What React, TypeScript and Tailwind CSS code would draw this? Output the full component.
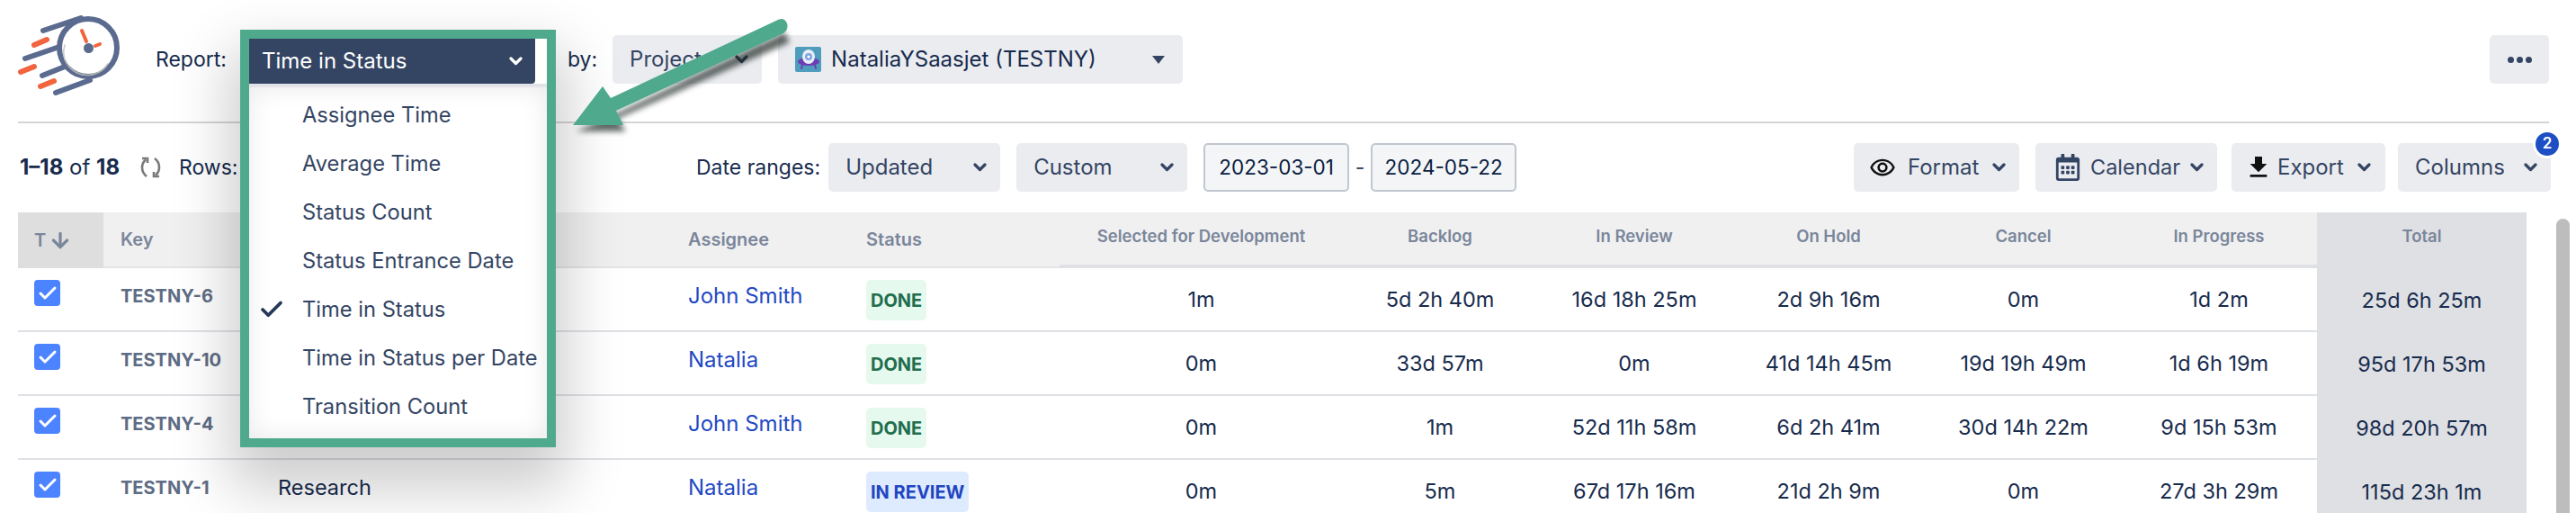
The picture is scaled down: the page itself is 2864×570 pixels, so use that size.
import { ArrowDown, Check } from "lucide-react";
import { FaRegCalendarAlt } from "react-icons/fa";
import { MdFileDownload, MdOutlineRemoveRedEye } from "react-icons/md";

const rows = [
  { key: "TESTNY-6", summary: "", assignee: "John Smith", status: "DONE", times: ["1m", "5d 2h 40m", "16d 18h 25m", "2d 9h 16m", "0m", "1d 2m", "25d 6h 25m"] },
  { key: "TESTNY-10", summary: "", assignee: "Natalia", status: "DONE", times: ["0m", "33d 57m", "0m", "41d 14h 45m", "19d 19h 49m", "1d 6h 19m", "95d 17h 53m"] },
  { key: "TESTNY-4", summary: "", assignee: "John Smith", status: "DONE", times: ["0m", "1m", "52d 11h 58m", "6d 2h 41m", "30d 14h 22m", "9d 15h 53m", "98d 20h 57m"] },
  { key: "TESTNY-1", summary: "Research", assignee: "Natalia", status: "IN REVIEW", times: ["0m", "5m", "67d 17h 16m", "21d 2h 9m", "0m", "27d 3h 29m", "115d 23h 1m"] },
];

const reports = ["Assignee Time", "Average Time", "Status Count", "Status Entrance Date", "Time in Status", "Time in Status per Date", "Transition Count"];
const timeColumns = ["Selected for Development", "Backlog", "In Review", "On Hold", "Cancel", "In Progress"];
const gridCols = "grid grid-cols-[95px_183px_459px_198px_223px_315px_216px_216px_216px_217px_218px_233px]";

function Chevron({ className = "text-[#344563]" }: { className?: string }) {
  return (
    <svg width="15" height="10" viewBox="0 0 15 10" className={`shrink-0 ${className}`}>
      <path d="M2 2 L7.5 7.5 L13 2" fill="none" stroke="currentColor" strokeWidth="3.2" strokeLinecap="round" strokeLinejoin="round" />
    </svg>
  );
}

function Logo() {
  return (
    <svg width="115" height="92" viewBox="20 15 115 92" className="shrink-0">
      <g fill="none" strokeLinecap="round">
        <circle cx="98" cy="53" r="32" stroke="#5a6b8f" strokeWidth="6" />
        <path d="M72 66 A27 27 0 0 0 120 71" stroke="#b5b5b5" strokeWidth="1.5" />
        <path d="M72 50 A27 27 0 0 0 72 66" stroke="#c8c8c8" strokeWidth="1.5" />
        <g stroke="#5a6b8f" strokeWidth="6">
          <path d="M48 34 L90 20" />
          <path d="M28 65 L66 52" />
          <path d="M47 84 L72 74" />
          <path d="M62 103 L100 89" />
        </g>
        <g stroke="#f2643d" strokeWidth="6">
          <path d="M38 50 L52 44" />
          <path d="M23 80 L38 74" />
          <path d="M45 96 L60 90" />
        </g>
        <g stroke="#f2643d" strokeWidth="4">
          <path d="M91 34 L96 46" />
          <path d="M106 51 L111 49" />
        </g>
      </g>
      <circle cx="98.5" cy="53.5" r="5.5" fill="#5a6b8f" />
    </svg>
  );
}

function ProjectAvatar() {
  return (
    <svg width="29" height="28" viewBox="0 0 29 28" className="shrink-0">
      <rect width="29" height="28" rx="2" fill="#4f9dbd" />
      <ellipse cx="15" cy="16.5" rx="12" ry="4.5" fill="#6b3fb3" />
      <path d="M8 20 L7 24 M22 20 L23 24" stroke="#6b3fb3" strokeWidth="2" strokeLinecap="round" />
      <ellipse cx="15" cy="11" rx="7" ry="8" fill="#e8eef8" />
      <circle cx="15" cy="11" r="4" fill="#7fa4e0" />
      <circle cx="15" cy="11" r="1.6" fill="#ffffff" />
    </svg>
  );
}

function RefreshIcon() {
  return (
    <svg width="25" height="26" viewBox="0 0 25 26" className="shrink-0 text-[#7a7a7a]">
      <g fill="none" stroke="currentColor" strokeWidth="2.6">
        <path d="M8 23 C1.5 18 1.5 9 7 4.5" />
        <path d="M17 3 C23.5 8 23.5 17 18 21.5" />
        <path d="M3 3 H9 V8" />
        <path d="M22 23 H16 V18" />
      </g>
    </svg>
  );
}

function Arrow() {
  return (
    <svg width="300" height="170" viewBox="600 10 300 170" className="absolute left-[600px] top-[10px] pointer-events-none">
      <g transform="translate(3 7)" opacity="0.7" className="blur-[3px]">
        <path d="M869 29 L676 122 L637 139 L693 139 L683 125 L875 40 Z" fill="#1f2a25" />
      </g>
      <path d="M865 22 Q872 19 875 26 Q877 33 871 37 L685 123 L693 139 L637 139 L670 96 L679 109 Z" fill="#4fa98d" />
    </svg>
  );
}

function ReportMenu() {
  return (
    <div className="absolute left-[267px] top-[33px] w-[351px] h-[464px] border-[10px] border-[#4fa98d] bg-white shadow-[0_34px_60px_12px_rgba(0,0,0,0.2)]">
      <div className="flex h-[50px] w-[318px] items-center justify-between rounded-br-[4px] bg-[#344563] pl-[14px] pr-[14px] text-[24px] text-white">
        Time in Status
        <Chevron className="text-white" />
      </div>
      <div className="h-[4px] bg-[#e2e3e8]" />
      <div className="flex h-[390px] flex-col pt-[4px] shadow-[inset_0_0_28px_rgba(0,0,0,0.09)] text-[23.7px] text-[#344563]">
        {reports.map((name) => (
          <div key={name} className="flex h-[54px] shrink-0 items-center pl-[59px] relative whitespace-nowrap">
            {name === "Time in Status" && <Check className="absolute left-[10px] text-[#253858]" size={30} strokeWidth={3} />}
            {name}
          </div>
        ))}
      </div>
    </div>
  );
}

function Btn({ className, children }: { className: string; children: React.ReactNode }) {
  return <div className={`flex h-[54px] items-center rounded-[5px] bg-[#ebecf0] text-[24px] text-[#344563] ${className}`}>{children}</div>;
}

export default function App() {
  return (
    <div className="relative h-[570px] w-[2864px] overflow-hidden bg-white text-[#172b4d] font-['Inter',sans-serif]">
      <div className="flex h-[135px] items-start pl-[20px] pr-[30px]">
        <div className="mt-[15px]"><Logo /></div>
        <div className="mt-[39px] flex h-[54px] flex-1 items-center">
          <span className="ml-[38px] text-[23px]">Report:</span>
          <span className="ml-[379px] text-[23px]">by:</span>
          <Btn className="ml-[17px] w-[166px] justify-between pl-[19px] pr-[15px]">
            Project
            <Chevron className="text-[#253858]" />
          </Btn>
          <Btn className="ml-[18px] w-[450px] pl-[19px] pr-[20px]">
            <ProjectAvatar />
            <span className="ml-[11px] text-[#172b4d]">NataliaYSaasjet (TESTNY)</span>
            <span className="ml-auto h-0 w-0 border-x-[7px] border-t-[9px] border-x-transparent border-t-[#344563]" />
          </Btn>
          <Btn className="ml-auto w-[66px] justify-center gap-[3px]">
            <span className="h-[7px] w-[7px] rounded-full bg-[#344563]" />
            <span className="h-[7px] w-[7px] rounded-full bg-[#344563]" />
            <span className="h-[7px] w-[7px] rounded-full bg-[#344563]" />
          </Btn>
        </div>
      </div>

      <div className="ml-[20px] mr-[30px] h-[2px] bg-[#d4d4d4]" />

      <div className="mt-[22px] flex h-[54px] items-center pl-[22px] pr-[28px] text-[23px]">
        <span className="w-[133px] shrink-0 whitespace-nowrap text-[24px]">
          <span className="font-bold">1–18</span> of <span className="font-bold">18</span>
        </span>
        <RefreshIcon />
        <span className="ml-[19px] w-[576px] shrink-0">Rows:</span>
        <span className="-ml-[1px]">Date ranges:</span>
        <Btn className="ml-[9px] w-[191px] justify-between pl-[19px] pr-[15px]">
          Updated
          <Chevron />
        </Btn>
        <Btn className="ml-[18px] w-[190px] justify-between pl-[19px] pr-[15px]">
          Custom
          <Chevron />
        </Btn>
        <div className="ml-[18px] flex h-[54px] w-[162px] items-center justify-center rounded-[5px] border-2 border-[#c1c7d0] bg-[#f4f5f7] text-[22.5px] text-[#091e42]">2023-03-01</div>
        <span className="w-[24px] text-center text-[#344563]">-</span>
        <div className="flex h-[54px] w-[162px] items-center justify-center rounded-[5px] border-2 border-[#c1c7d0] bg-[#f4f5f7] text-[22.5px] text-[#091e42]">2024-05-22</div>
        <Btn className="ml-auto w-[184px] pl-[17px] pr-[15px]">
          <MdOutlineRemoveRedEye className="text-[#111] shrink-0" size={30} />
          <span className="ml-[13px]">Format</span>
          <span className="ml-auto"><Chevron /></span>
        </Btn>
        <Btn className="ml-[18px] w-[202px] pl-[21px] pr-[15px]">
          <FaRegCalendarAlt size={30} className="shrink-0" />
          <span className="ml-[10px] text-[23.5px]">Calendar</span>
          <span className="ml-auto"><Chevron /></span>
        </Btn>
        <Btn className="ml-[16px] w-[171px] pl-[14px] pr-[16px]">
          <MdFileDownload className="text-[#111] shrink-0" size={32} />
          <span className="ml-[5px]">Export</span>
          <span className="ml-auto"><Chevron /></span>
        </Btn>
        <Btn className="relative ml-[14px] w-[170px] justify-between pl-[19px] pr-[15px]">
          Columns
          <Chevron />
          <span className="absolute -right-[12px] -top-[15px] flex h-[32px] w-[32px] items-center justify-center rounded-full border-[3px] border-white bg-[#1d4fc4] text-[17px] font-semibold text-white">2</span>
        </Btn>
      </div>

      <div className={`${gridCols} ml-[20px] mt-[23px] h-[62px] text-[#7a869a] font-semibold`}>
        <div className="flex items-center gap-[3px] bg-[#dedede] pl-[18px] text-[20px]">
          T
          <ArrowDown size={26} strokeWidth={3} />
        </div>
        <div className="flex items-center border-b-2 border-[#e4e4e4] bg-[#f0f0f1] pl-[19px] text-[20px]">Key</div>
        <div className="border-b-2 border-[#e4e4e4] bg-[#f0f0f1]" />
        <div className="flex items-center border-b-2 border-[#e4e4e4] bg-[#f0f0f1] pl-[8px] text-[20px]">Assignee</div>
        <div className="flex items-center border-b-2 border-[#e4e4e4] bg-[#f0f0f1] pl-[8px] text-[20px]">Status</div>
        {timeColumns.map((name) => (
          <div key={name} className="flex items-center justify-center border-b-4 border-[#e0e1e5] bg-[#f0f0f1] pb-[4px] text-[18.5px]">{name}</div>
        ))}
        <div className="flex items-center justify-center bg-[#dfe0e4] pb-[8px] text-[18.5px]">Total</div>
      </div>

      {rows.map((row) => (
        <div key={row.key} className={`${gridCols} ml-[20px] h-[71px] text-[23.5px]`}>
          <div className="border-b-2 border-[#dfe1e6] pl-[18px] pt-[13px]">
            <div className="flex h-[29px] w-[29px] items-center justify-center rounded-[4px] bg-[#4c84ff]">
              <Check size={24} strokeWidth={3} className="text-white" />
            </div>
          </div>
          <div className="flex items-center border-b-2 border-[#dfe1e6] pb-[8px] pl-[19px] text-[20px] font-bold text-[#5e6c84]">{row.key}</div>
          <div className="flex items-center border-b-2 border-[#dfe1e6] pb-[8px] pl-[11px]">{row.summary}</div>
          <div className="flex items-center border-b-2 border-[#dfe1e6] pb-[8px] pl-[8px] text-[24px] text-[#1f49c4]">{row.assignee}</div>
          <div className="border-b-2 border-[#dfe1e6] pl-[8px] pt-[13px]">
            <span className={`inline-flex h-[45px] items-center rounded-[5px] px-[5px] text-[20px] font-bold ${row.status === "DONE" ? "bg-[#e6f9ee] text-[#216e4e]" : "bg-[#deebff] text-[#1f45c0]"}`}>{row.status}</span>
          </div>
          {row.times.map((t, i) => (
            <div key={i} className={`flex items-center justify-center ${i === 6 ? "bg-[#dfe0e4]" : "border-b-2 border-[#dfe1e6] pt-[1px]"}`}>{t}</div>
          ))}
        </div>
      ))}

      <ReportMenu />
      <Arrow />
      <div className="absolute left-[2842px] top-[243px] h-[340px] w-[15px] rounded-t-full bg-[#bdbdbd]" />
    </div>
  );
}
